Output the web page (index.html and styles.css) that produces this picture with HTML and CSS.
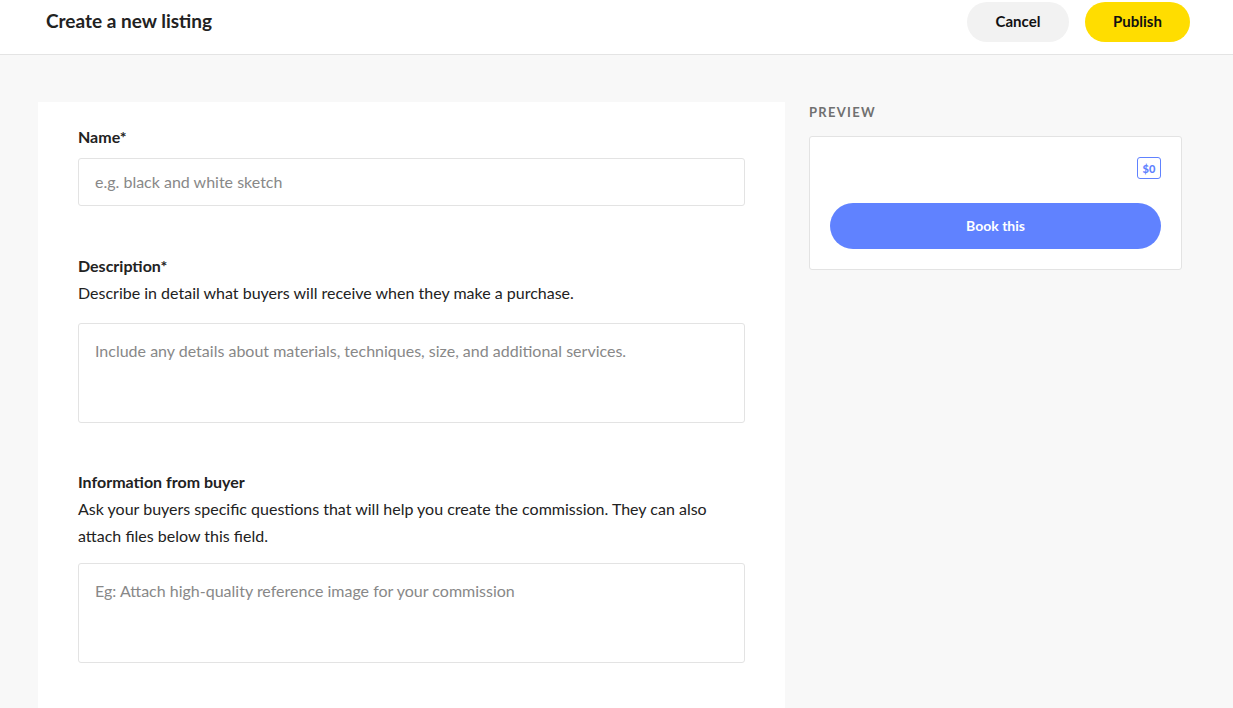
FILE: index.html
```html
<!DOCTYPE html>
<html>
<head>
<meta charset="utf-8">
<link rel="stylesheet" href="styles.css">
</head>
<body>
<header class="topbar">
  <h1 class="title">Create a new listing</h1>
  <div class="actions">
    <button class="btn btn-cancel">Cancel</button>
    <button class="btn btn-publish">Publish</button>
  </div>
</header>
<main class="layout">
  <section class="form-card">
    <div class="field first">
      <label class="label">Name*</label>
      <div class="input">e.g. black and white sketch</div>
    </div>
    <div class="field">
      <label class="label">Description*</label>
      <p class="help">Describe in detail what buyers will receive when they make a purchase.</p>
      <div class="input textarea">Include any details about materials, techniques, size, and additional services.</div>
    </div>
    <div class="field last">
      <label class="label">Information from buyer</label>
      <p class="help">Ask your buyers specific questions that will help you create the commission. They can also attach files below this field.</p>
      <div class="input textarea">Eg: Attach high-quality reference image for your commission</div>
    </div>
  </section>
  <aside class="side">
    <div class="preview-label">PREVIEW</div>
    <div class="preview-card">
      <div class="price-row"><span class="price">$0</span></div>
      <button class="book">Book this</button>
    </div>
  </aside>
</main>
</body>
</html>
```

FILE: styles.css
```css
* { box-sizing: border-box; }
html, body { margin: 0; padding: 0; }
body {
  background: #f8f8f8;
  font-family: "Lato", "Liberation Sans", sans-serif;
  color: #222;
  height: 708px;
  overflow: hidden;
}
.topbar {
  height: 55px;
  background: #fff;
  border-bottom: 1px solid #e4e4e4;
  display: flex;
  align-items: flex-start;
  justify-content: space-between;
  padding: 2px 43px 0 46px;
}
.title {
  margin: 0;
  font-size: 19px;
  font-weight: 700;
  line-height: 38px;
  color: #222;
}
.actions { display: flex; gap: 16px; }
.btn {
  height: 40px;
  border: none;
  border-radius: 20px;
  font-family: inherit;
  font-weight: 700;
  font-size: 15px;
  line-height: 38px;
  padding: 0 0 2px;
  color: #111;
  cursor: pointer;
}
.btn-cancel { background: #f2f2f2; width: 102px; }
.btn-publish { background: #ffdd00; width: 105px; }
.layout {
  display: flex;
  align-items: flex-start;
  gap: 24px;
  padding: 47px 0 0 38px;
}
.form-card {
  background: #fff;
  width: 747px;
  height: 606px;
  overflow: hidden;
  padding: 24px 40px 0;
}
.field { margin-bottom: 48px; }
.field.first { margin-bottom: 49px; }
.field.last { margin-bottom: 0; }
.label {
  display: block;
  font-size: 16px;
  font-weight: 700;
  line-height: 22px;
  margin-bottom: 10px;
}
.help {
  margin: -8px 0 17px;
  font-size: 16px;
  line-height: 27px;
  color: #222;
}
.field.last .help { margin-bottom: 14px; }
.input {
  height: 48px;
  border: 1px solid #e3e3e3;
  border-radius: 3px;
  padding: 0 16px;
  font-size: 16px;
  line-height: 46px;
  color: #888;
}
.textarea {
  height: 100px;
  line-height: 22px;
  padding-top: 16px;
}
.side { width: 373px; }
.preview-label {
  font-size: 13px;
  font-weight: 700;
  letter-spacing: 1.3px;
  color: #707070;
  line-height: 20px;
  margin: 0 0 14px;
}
.preview-card {
  background: #fff;
  border: 1px solid #e3e3e3;
  border-radius: 3px;
  padding: 20px;
}
.price-row { display: flex; justify-content: flex-end; margin-bottom: 24px; }
.price {
  display: inline-flex;
  align-items: center;
  justify-content: center;
  width: 24px;
  height: 22px;
  border: 1px solid #6082ff;
  border-radius: 3px;
  color: #6082ff;
  font-size: 11px;
  font-weight: 900;
}
.book {
  display: block;
  width: 100%;
  height: 46px;
  border: none;
  border-radius: 23px;
  background: #6082ff;
  color: #fff;
  font-family: inherit;
  font-size: 14px;
  font-weight: 700;
  padding: 0 0 2px;
}
```
